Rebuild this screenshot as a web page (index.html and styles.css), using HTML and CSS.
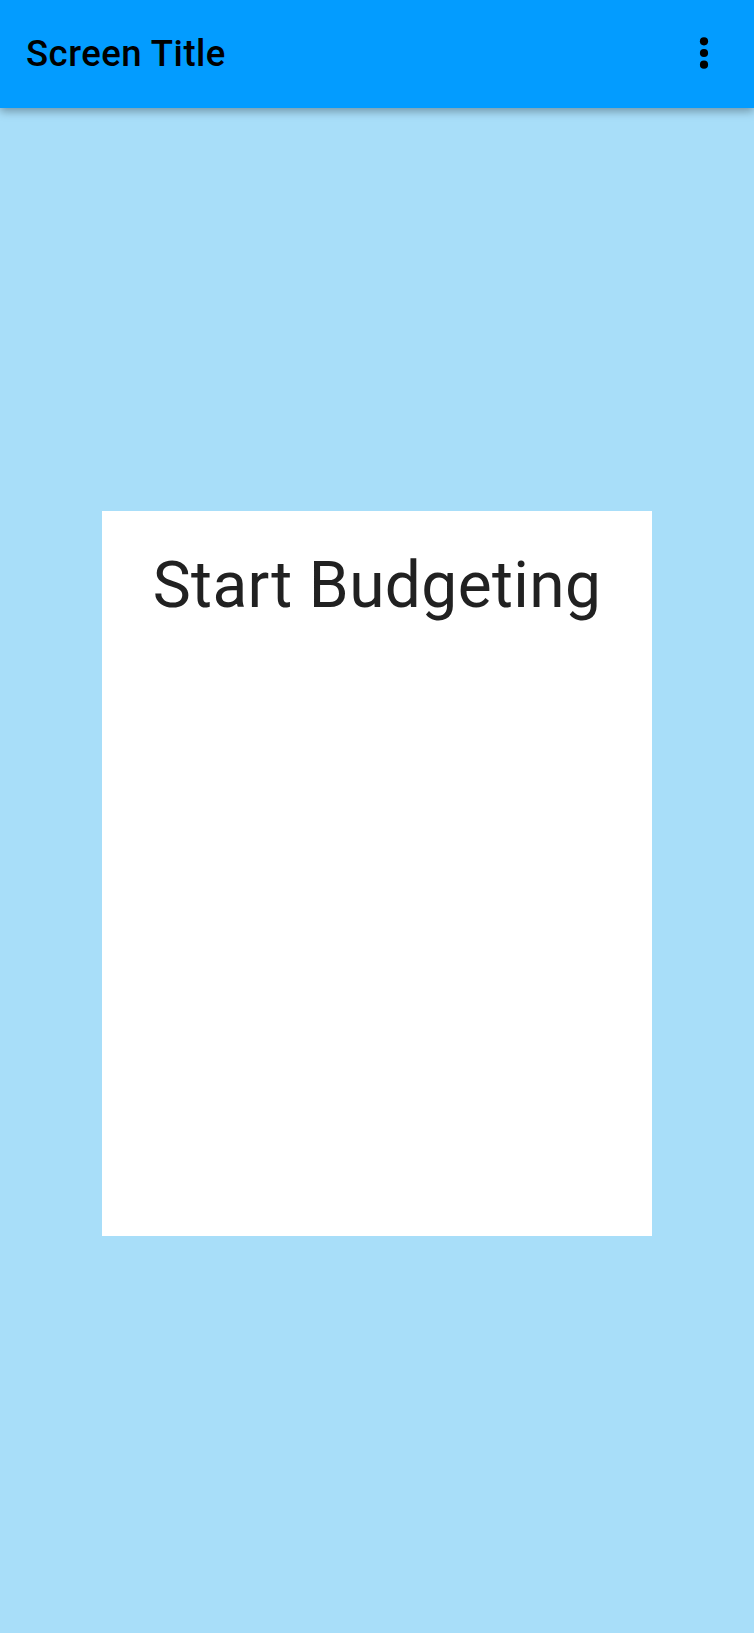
FILE: index.html
```html
<!DOCTYPE html>
<html lang="en">
<head>
<meta charset="utf-8">
<title>Screen Title</title>
<link rel="stylesheet" href="styles.css">
</head>
<body>
<div class="screen">
  <header class="app-bar">
    <h1 class="app-title">Screen Title</h1>
    <button class="menu-btn" aria-label="More options">
      <svg width="10" height="32" viewBox="0 0 10 32" aria-hidden="true">
        <circle cx="5" cy="4.3" r="4.1" fill="#000"/>
        <circle cx="5" cy="16" r="4.1" fill="#000"/>
        <circle cx="5" cy="27.7" r="4.1" fill="#000"/>
      </svg>
    </button>
  </header>
  <main class="content">
    <section class="card">
      <h2 class="card-title">Start Budgeting</h2>
    </section>
  </main>
</div>
</body>
</html>
```

FILE: styles.css
```css
* { box-sizing: border-box; }
html, body { margin: 0; padding: 0; }
body {
  background: #a8def9;
  font-family: Roboto, "Noto Sans", sans-serif;
}
.screen {
  min-height: 1633px;
  display: flex;
  flex-direction: column;
}
.app-bar {
  height: 108px;
  background: #039cff;
  display: flex;
  align-items: center;
  justify-content: space-between;
  padding: 0 45px 0 26px;
  box-shadow: 0 3px 9px rgba(0, 0, 0, 0.35);
  position: relative;
  z-index: 1;
}
.app-title {
  margin: 0;
  font-size: 36.5px;
  line-height: 1;
  font-weight: 500;
  color: #000;
  letter-spacing: 0.5px;
}
.menu-btn {
  background: none;
  border: 0;
  padding: 0;
  width: 10px;
  height: 32px;
  display: flex;
  margin-top: -2px;
}
.content {
  flex: 1;
  display: flex;
  justify-content: center;
  padding-top: 403px;
}
.card {
  width: 550px;
  height: 725px;
  background: #fff;
  padding-top: 43px;
}
.card-title {
  margin: 0;
  text-align: center;
  font-size: 64px;
  line-height: 1;
  font-weight: 400;
  color: #212121;
  letter-spacing: 0.4px;
}
```
